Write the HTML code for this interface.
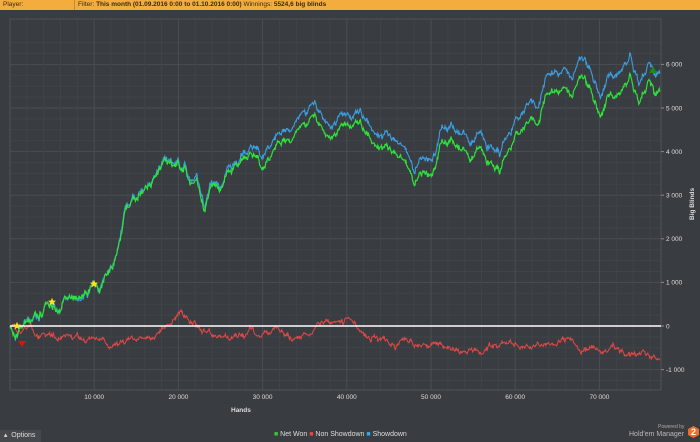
<!DOCTYPE html>
<html><head><meta charset="utf-8"><style>
body{margin:0;width:700px;height:442px;background:#393c40;overflow:hidden;font-family:"Liberation Sans",sans-serif;position:relative}
.top{position:absolute;left:0;top:0;width:700px;height:10px;background:#f3ad3e;font-size:6.5px;line-height:10px;color:#3a2a10}
.t{position:absolute;color:#ddd;font-size:6.5px;white-space:nowrap}
</style></head><body>
<div class="top"><span style="position:absolute;left:3px">Player:</span><div style="position:absolute;left:74px;top:0;width:1px;height:10px;background:#c98a28"></div><span style="position:absolute;left:78px">Filter: <b>This month (01.09.2016 0:00 to 01.10.2016 0:00)</b> Winnings: <b>5524,6 big blinds</b></span></div>
<svg id="s" width="700" height="442" style="position:absolute;left:0;top:0"></svg>
<div class="t" style="left:231px;top:407px;font-weight:bold">Hands</div>
<div class="t" style="left:689px;top:220px;transform:rotate(-90deg);transform-origin:0 0;font-weight:bold">Big Blinds</div>
<div class="t" style="left:274px;top:431px;font-size:7px"><span style="color:#3c3">■</span> Net Won <span style="color:#e44">■</span> Non Showdown <span style="color:#3ae">■</span> Showdown</div>
<div style="position:absolute;left:0;top:430px;width:41px;height:12px;background:#45484c;color:#ddd;font-size:7px;line-height:12px">&nbsp;&nbsp;▴&nbsp; Options</div>
<div class="t" style="left:658px;top:424px;font-size:5px;color:#aaa">Powered by</div>
<div class="t" style="left:629px;top:431px;font-size:7px;color:#bbb">Hold'em Manager</div>
<div style="position:absolute;left:688px;top:426px;width:11px;height:12px;background:#e8702a;clip-path:polygon(50% 0,100% 25%,100% 75%,50% 100%,0 75%,0 25%);color:#fff;font-size:9px;font-weight:bold;text-align:center;line-height:12px">2</div>
<script>
var s=document.getElementById('s'),h='';
var L=10,R=661,T=19,B=390;
for(var v=-1500;v<=6500;v+=250){var y=326-v*0.0436;if(y<T||y>B)continue;h+='<line x1="'+L+'" x2="'+R+'" y1="'+y+'" y2="'+y+'" stroke="'+(v%1000==0?'#4a4e53':'#404448')+'"/>';}
for(var k=0;k<=78000;k+=2000){var x=10+k*0.00842;if(x>R)break;h+='<line y1="'+T+'" y2="'+B+'" x1="'+x+'" x2="'+x+'" stroke="'+(k%10000==0?'#4a4e53':'#404448')+'"/>';}
h+='<rect x="'+L+'" y="'+T+'" width="'+(R-L)+'" height="'+(B-T)+'" fill="none" stroke="#50545a"/>';
for(var k=1;k<=7;k++){var x=10+k*84.2;h+='<text x="'+x+'" y="399" fill="#ddd" font-size="6.5" text-anchor="middle">'+k+'0 000</text>';}
for(var v=-1;v<=6;v++){var y=326-v*43.6;h+='<line x1="661" x2="664" y1="'+y+'" y2="'+y+'" stroke="#888"/><text x="666" y="'+(y+2.3)+'" fill="#ddd" font-size="6.5">'+(v==0?'0':(v<0?'-1 000':v+' 000'))+'</text>';}
var g=[[10,330],[15,338],[20,325],[30,320],[40,315],[50,305],[60,315],[65,300],[75,295],[85,290],[95,285],[100,290],[105,270],[110,265],[115,255],[120,240],[125,215],[130,205],[140,195],[150,185],[155,180],[160,175],[170,168],[180,170],[185,165],[190,185],[195,175],[200,190],[205,205],[210,185],[215,180],[220,185],[230,170],[240,160],[250,150],[260,162],[270,150],[280,140],[290,135],[300,130],[310,120],[315,118],[320,125],[330,135],[340,130],[350,125],[360,130],[370,140],[380,150],[390,155],[400,160],[410,175],[415,188],[420,175],[430,170],[440,145],[450,140],[460,150],[470,160],[480,145],[490,160],[500,170],[510,140],[520,125],[530,112],[540,115],[545,100],[550,95],[560,90],[570,100],[580,85],[590,95],[600,115],[610,90],[620,100],[630,80],[640,100],[650,75],[655,95],[660,90]];
var r=[[10,328],[40,333],[80,340],[140,345],[180,318],[200,330],[230,340],[270,330],[300,335],[320,322],[345,322],[380,340],[430,345],[470,348],[520,345],[570,340],[600,350],[660,356]];
var seed=11;function rnd(){seed=(seed*16807)%2147483647;return seed/2147483647-0.5;}
function interp(a,x){for(var i=1;i<a.length;i++)if(x<=a[i][0]){var t=(x-a[i-1][0])/(a[i][0]-a[i-1][0]);return a[i-1][1]+t*(a[i][1]-a[i-1][1]);}return a[a.length-1][1];}
var pg='',pb='',pr='',j=0,jr=0,jb=0;
for(var x=10;x<=660;x+=0.6){j=j*0.95+rnd()*5;jb=jb*0.9+rnd()*2;jr=jr*0.94+rnd()*4;var y=interp(g,x)+j+rnd()*3;var off=x<100?0:Math.min(20,(x-100)*0.03+(x>250?4:0));pg+=x.toFixed(1)+','+y.toFixed(1)+' ';pb+=x.toFixed(1)+','+(y-off+jb).toFixed(1)+' ';pr+=x.toFixed(1)+','+(interp(r,x)+jr+rnd()*2.5).toFixed(1)+' ';}
h+='<polyline points="'+pr+'" fill="none" stroke="#e04848" stroke-width="1"/>';
h+='<polyline points="'+pb+'" fill="none" stroke="#3a9ee0" stroke-width="1.1"/>';
h+='<polyline points="'+pg+'" fill="none" stroke="#2de23a" stroke-width="1.2"/>';
h+='<line x1="10" x2="661" y1="326" y2="326" stroke="#fff" stroke-width="1.5"/>';
function star(cx,cy){var p='';for(var i=0;i<10;i++){var a=Math.PI/5*i-Math.PI/2,rr=i%2?1.8:4.2;p+=(cx+rr*Math.cos(a)).toFixed(1)+','+(cy+rr*Math.sin(a)).toFixed(1)+' ';}return '<polygon points="'+p+'" fill="#ffe21a"/>';}
h+=star(17,326)+star(52,302)+star(94,284);
h+='<polygon points="18,341 26,341 22,347" fill="#e01010"/><polygon points="649,73 657,73 653,66" fill="#1a8a1a"/>';
s.innerHTML=h;
</script>
</body></html>
